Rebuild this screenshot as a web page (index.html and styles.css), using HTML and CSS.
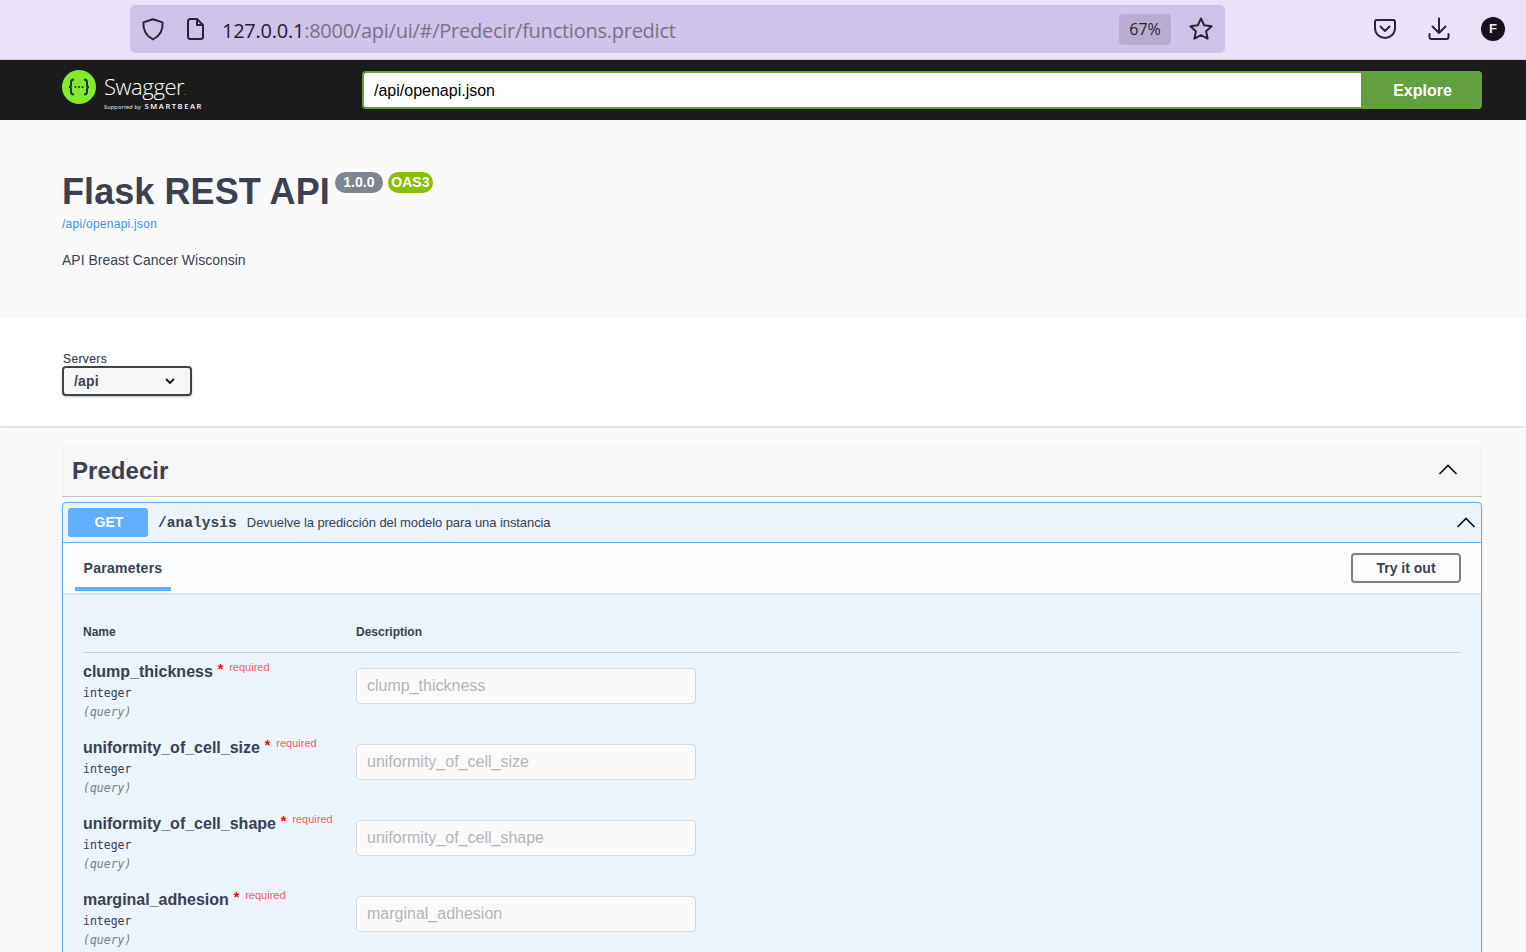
FILE: index.html
```html
<!DOCTYPE html>
<html><head><title>Swagger UI</title><meta charset="utf-8">
<link rel="stylesheet" href="styles.css">
</head>
<body>
<div class="navegador">
    <div class="direccion">
        <svg class="ico escudo" width="24" height="24" viewBox="0 0 24 24"><path d="M12 2.2 L21.6 5.4 C22 13 19 19 12 22.4 C5 19 2 13 2.4 5.4 Z"/></svg>
        <svg class="ico" width="20" height="24" viewBox="0 0 20 24"><path d="M3 4.5 Q3 2 5.5 2 H12 L18 8 V19.5 Q18 22 15.5 22 H5.5 Q3 22 3 19.5 Z M12 2 V8 H18"/></svg>
        <div class="url"><span class="host">127.0.0.1</span>:8000/api/ui/#/Predecir/functions.predict</div>
        <div class="zoom">67%</div>
        <svg class="ico estrella" width="26" height="26" viewBox="0 0 26 26"><path d="M13 2.5 L16.2 9.3 L23.6 10.2 L18.1 15.3 L19.6 22.7 L13 19 L6.4 22.7 L7.9 15.3 L2.4 10.2 L9.8 9.3 Z"/></svg>
    </div>
    <div class="herramientas">
        <svg class="ico" width="24" height="24" viewBox="0 0 24 24"><path d="M4 3 H20 Q22 3 22 5 V11 C22 17 17 21 12 21 C7 21 2 17 2 11 V5 Q2 3 4 3 Z M7.5 9.5 L12 14 L16.5 9.5"/></svg>
        <svg class="ico" width="24" height="24" viewBox="0 0 24 24"><path d="M12 1.5 V16 M5.5 9.5 L12 16 L18.5 9.5 M2.5 17 V20 Q2.5 22 4.5 22 H19.5 Q21.5 22 21.5 20 V17"/></svg>
        <div class="avatar">F</div>
    </div>
</div>

<div class="topbar">
    <div class="logo">
        <svg class="circulo" width="34" height="34" viewBox="0 0 34 34"><circle cx="17" cy="17" r="17" fill="#85ea2d"/><path class="llaves" d="M12 9.5 Q9 9.5 9 12 V15 Q9 17 7 17 Q9 17 9 19 V22 Q9 24.500 12 24.500 M22 9.500 Q25 9.500 25 12 V15 Q25 17 27 17 Q25 17 25 19 V22 Q25 24.500 22 24.500"/><circle cx="13.500" cy="17" r="1.100" fill="#173647"/><circle cx="17" cy="17" r="1.100" fill="#173647"/><circle cx="20.500" cy="17" r="1.100" fill="#173647"/></svg>
        <div class="marca">
            <div class="swagger">Swagger<span class="punto">.</span></div>
            <div class="soporte"><span class="por">Supported by</span> SMARTBEAR</div>
        </div>
    </div>
    <div class="buscador">
        <div class="campo">/api/openapi.json</div>
        <div class="explore">Explore</div>
    </div>
</div>

<div class="info">
    <div class="titulo"><h1>Flask REST API</h1><span class="badge gris">1.0.0</span><span class="badge verde">OAS3</span></div>
    <a class="enlace" href="#">/api/openapi.json</a>
    <p class="descripcion">API Breast Cancer Wisconsin</p>
</div>

<div class="servidores">
    <div class="etiqueta">Servers</div>
    <div class="selector">/api
        <svg width="20" height="20" viewBox="0 0 20 20"><path d="M6 8 L10 12 L14 8"/></svg>
    </div>
</div>

<div class="contenido">
    <div class="tag">
        <h3>Predecir</h3>
        <svg class="flecha" width="20" height="20" viewBox="0 0 20 20"><path d="M1.500 14 L10 5.500 L18.500 14"/></svg>
    </div>
    <div class="bloque">
        <div class="resumen">
            <div class="metodo">GET</div>
            <div class="ruta">/analysis</div>
            <div class="textoruta">Devuelve la predicción del modelo para una instancia</div>
            <svg class="flecha" width="20" height="20" viewBox="0 0 20 20"><path d="M1.500 14 L10 5.500 L18.500 14"/></svg>
        </div>
        <div class="cabecera">
            <div class="pestana">Parameters</div>
            <div class="probar">Try it out</div>
        </div>
        <div class="parametros">
            <div class="columnas"><div class="colnombre">Name</div><div>Description</div></div>

            <div class="fila">
                <div class="colnombre">
                    <div class="nombre">clump_thickness<span class="asterisco">&nbsp;*</span><span class="requerido">required</span></div>
                    <div class="tipo">integer</div>
                    <div class="lugar">(query)</div>
                </div>
                <div class="entrada">clump_thickness</div>
            </div>
            <div class="fila">
                <div class="colnombre">
                    <div class="nombre">uniformity_of_cell_size<span class="asterisco">&nbsp;*</span><span class="requerido">required</span></div>
                    <div class="tipo">integer</div>
                    <div class="lugar">(query)</div>
                </div>
                <div class="entrada">uniformity_of_cell_size</div>
            </div>
            <div class="fila">
                <div class="colnombre">
                    <div class="nombre">uniformity_of_cell_shape<span class="asterisco">&nbsp;*</span><span class="requerido">required</span></div>
                    <div class="tipo">integer</div>
                    <div class="lugar">(query)</div>
                </div>
                <div class="entrada">uniformity_of_cell_shape</div>
            </div>
            <div class="fila">
                <div class="colnombre">
                    <div class="nombre">marginal_adhesion<span class="asterisco">&nbsp;*</span><span class="requerido">required</span></div>
                    <div class="tipo">integer</div>
                    <div class="lugar">(query)</div>
                </div>
                <div class="entrada">marginal_adhesion</div>
            </div>
        </div>
    </div>
</div>
</body>
</html>
```

FILE: styles.css
```css
html, body {margin: 0; height: 952px; overflow: hidden;}
body {font-family: "Liberation Sans", Arial, sans-serif; color: #3b4151; background: #fafafa;}

/* barra del navegador */
.navegador {height: 59px; background: #ebe2f8; border-bottom: 1px solid #d6cde4; display: flex; align-items: flex-start;}
.direccion {margin: 5px 0 0 130px; width: 1095px; height: 48px; box-sizing: border-box; background: #cfc3e9; border-radius: 5px; display: flex; align-items: center; padding: 0 11px;}
.ico {fill: none; stroke: #2a2536; stroke-width: 2; stroke-linejoin: round; stroke-linecap: round; flex: none;}
.escudo {margin-right: 20px;}
.url {flex: 1; margin-left: 17px; padding-top: 2px; font-family: "Open Sans", sans-serif; font-size: 20px; color: #7a7386; white-space: nowrap; letter-spacing: -0.25px;}
.host {color: #231f2e;}
.zoom {width: 52px; height: 31px; background: #b9adcf; border-radius: 4px; text-align: center; line-height: 31px; font-family: "Open Sans", sans-serif; font-size: 16px; color: #2a2536;}
.estrella {margin: 0 0 0 17px;}
.herramientas {display: flex; align-items: center; margin: 17px 0 0 148px; gap: 30px;}
.avatar {width: 24px; height: 24px; border-radius: 50%; background: #17121f; color: #f1ecf8; font-size: 13px; font-weight: bold; text-align: center; line-height: 24px;}

/* barra de swagger */
.topbar {height: 60px; background: #1b1b1b; display: flex; align-items: center; padding: 0 44px 0 62px;}
.logo {width: 300px; display: flex; align-items: center; gap: 8px; color: #fff; font-family: "Open Sans", sans-serif;}
.circulo {margin-bottom: 6px;}
.llaves {fill: none; stroke: #173647; stroke-width: 2;}
.marca {margin-top: 5px;}
.swagger {font-size: 22px; line-height: 24px; letter-spacing: -0.4px; font-weight: 300;}
.punto {font-size: 8px;}
.soporte {font-size: 7.500px; line-height: 9px; letter-spacing: 1.600px; font-weight: 600; margin-top: -2px;}
.por {font-size: 5.500px; letter-spacing: 0.200px; font-weight: 400;}
.buscador {flex: 1; display: flex; height: 38px;}
.campo {flex: 1; box-sizing: border-box; background: #fff; border: 2px solid #62a03f; border-right: 0; border-radius: 4px 0 0 4px; padding-left: 10px; line-height: 36px; font-size: 16px; color: #000;}
.explore {width: 119px; padding-left: 2px; background: #62a03f; border-radius: 0 4px 4px 0; color: #fff; font-weight: bold; font-size: 16px; text-align: center; line-height: 40px;}

/* informacion */
.info {height: 198px; box-sizing: border-box; padding: 50px 44px 0 62px; background: #fafafa;}
.titulo {display: flex; align-items: flex-start; height: 44px;}
h1 {margin: 0; font-size: 36px; line-height: 44px; font-weight: bold; letter-spacing: 0.08px;}
.badge {height: 21px; border-radius: 11px; color: #fff; font-size: 14px; font-weight: bold; line-height: 21px; text-align: center; margin-top: 2px;}
.gris {width: 48px; background: #7d8492; margin-left: 5px;}
.verde {width: 45px; background: #89bf04; margin-left: 5px;}
.enlace {display: block; margin-top: 3px; font-size: 12px; line-height: 15px; color: #4990e2; text-decoration: none; letter-spacing: 0.26px;}
.descripcion {margin: 19px 0 0; font-size: 14px; line-height: 18px;}

/* servidores */
.servidores {height: 108px; box-sizing: border-box; padding: 34px 0 0 62px; background: #fff; box-shadow: 0 1px 2px rgba(0,0,0,.15);}
.etiqueta {font-size: 12px; line-height: 14px; padding-left: 1px; letter-spacing: 0.4px; -webkit-text-stroke: 0.2px #3b4151;}
.selector {width: 130px; height: 30px; box-sizing: border-box; background: #f7f7f7; border: 2px solid #41444e; border-radius: 4px; box-shadow: 0 1px 2px rgba(0,0,0,.25); padding: 0 10px; font-size: 14px; font-weight: bold; line-height: 26px; letter-spacing: 0.2px; display: flex; justify-content: space-between; align-items: center;}
.selector svg {fill: none; stroke: #111; stroke-width: 1.800;}

/* operaciones */
.contenido {padding: 20px 44px 0 62px;}
.tag {height: 51px; box-sizing: border-box; background: #f6f6f6; border-bottom: 1px solid #c4c4c4; display: flex; justify-content: space-between; align-items: center; padding: 0 24px 0 10px;}
h3 {margin: 0; font-size: 24px; font-weight: bold; line-height: 50px; letter-spacing: 0.05px;}
.tag .flecha {margin-bottom: 2px;}
.flecha {fill: none; stroke: #111; stroke-width: 1.700;}
.bloque {margin-top: 5px; border: 1px solid #61affe; border-radius: 4px; background: #ebf3fb; box-shadow: 0 0 3px rgba(0,0,0,.12);}
.resumen {height: 39px; display: flex; align-items: center; padding: 0 5px; border-bottom: 1px solid #61affe; position: relative;}
.metodo {width: 78px; height: 29px; padding-left: 2px; background: #61affe; border-radius: 3px; color: #fff; font-size: 14px; font-weight: bold; text-align: center; line-height: 29px;}
.ruta {margin-left: 10px; font-family: "Liberation Mono", monospace; font-weight: bold; font-size: 14.600px;}
.textoruta {margin-left: 10px; font-size: 13px; letter-spacing: -0.08px; flex: 1;}
.cabecera {height: 50px; background: #fbfdff; border-bottom: 1px solid #d9dde3; box-shadow: 0 1px 2px rgba(0,0,0,.06); display: flex; justify-content: space-between; align-items: flex-start; padding: 0 20px 0 12px;}
.pestana {width: 96px; height: 48px; box-sizing: border-box; border-bottom: 4px solid #61affe; text-align: center; font-size: 14px; font-weight: bold; line-height: 50px; letter-spacing: 0.25px;}
.probar {margin-top: 10px; width: 110px; height: 30px; box-sizing: border-box; border: 2px solid #808080; border-radius: 4px; text-align: center; font-size: 14px; font-weight: bold; line-height: 26px;}
.parametros {padding: 30px 20px 0; height: 400px;}
.columnas {display: flex; height: 27px; padding-top: 1px; border-bottom: 1px solid #c5cfdf; font-size: 12px; font-weight: bold; line-height: 15px;}
.colnombre {width: 273px;}
.fila {display: flex; height: 76px;}
.fila:nth-child(2) {margin-top: 9px;}
.nombre {font-size: 16px; font-weight: bold; line-height: 20px; white-space: nowrap;}
.asterisco {color: #f00; font-size: 14px; position: relative; top: -3px; margin-left: 1px;}
.requerido {color: #ff5a66; font-size: 11px; margin-left: 6px; position: relative; top: -6px; font-weight: normal;}
.tipo {font-family: "DejaVu Sans Mono", monospace; font-size: 11.500px; line-height: 14px; margin-top: 3px; color: #3b4151;}
.lugar {font-family: "DejaVu Sans Mono", monospace; font-style: italic; font-size: 11.500px; line-height: 14px; margin-top: 5px; color: #7b7f87;}
.entrada {width: 340px; height: 36px; box-sizing: border-box; margin-top: 6px; background: #fafafa; border: 1px solid #d9d9d9; border-radius: 4px; padding-left: 10px; line-height: 34px; font-size: 16px; color: #b5b5b5;}
```
